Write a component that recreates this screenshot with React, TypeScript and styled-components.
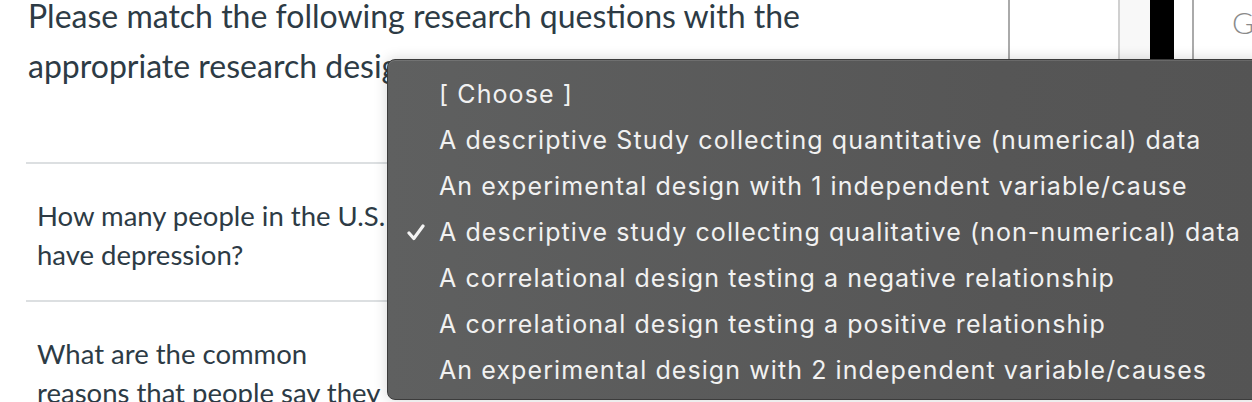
import React from 'react';
import styled, { createGlobalStyle } from 'styled-components';

const GlobalStyle = createGlobalStyle`
  html, body {
    margin: 0;
    padding: 0;
    background: #ffffff;
    overflow: hidden;
  }
  #root {
    width: 1252px;
    height: 402px;
  }
`;

const Page = styled.div`
  position: relative;
  display: flex;
  width: 1252px;
  height: 402px;
  overflow: hidden;
  font-family: Lato, 'Open Sans', sans-serif;
  color: #2d3b45;
`;

const Main = styled.div`
  width: 1008px;
  flex: none;
  padding-left: 26px;
  box-sizing: border-box;
`;

const Heading = styled.h2`
  margin: -9px 0 0 2px;
  font-size: 32px;
  font-weight: 400;
  line-height: 50px;
  height: 171px;
  width: 800px;
`;

const Row = styled.div`
  border-top: 2px solid #dcdfe1;
  padding: 32px 0 26px 11px;
  width: 620px;
`;

const Question = styled.div`
  width: 362px;
  font-size: 27.5px;
  line-height: 39px;
`;

const Columns = styled.div`
  flex: 1;
  display: flex;
  height: 60px;
`;

const Col = styled.div<{ $w: number; $line?: string; $bg?: string }>`
  flex: none;
  width: ${(p) => p.$w}px;
  border-left: ${(p) => (p.$line ? `2px solid ${p.$line}` : 'none')};
  background: ${(p) => p.$bg || 'transparent'};
  box-sizing: border-box;
`;

const Letter = styled.div`
  flex: 1;
  border-left: 2px solid #aaaaaa;
  padding: 4px 0 0 38px;
  font-size: 30px;
  font-weight: 300;
  color: #8a8a8a;
`;

const Menu = styled.ul`
  position: absolute;
  left: 387px;
  top: 59px;
  right: -12px;
  bottom: 2px;
  margin: 0;
  padding: 11px 0 7px 0;
  list-style: none;
  border: 1px solid #3c3c3c;
  border-radius: 8px;
  background: linear-gradient(to right, #5f6060, #565656 70%, #545454);
  box-shadow: 0 0 14px rgba(0, 0, 0, 0.16), inset 0 1px 0 rgba(255, 255, 255, 0.12);
  font-family: Inter, 'Noto Sans', sans-serif;
  color: #f1f1f1;
`;

const Item = styled.li`
  position: relative;
  height: 46px;
  line-height: 46px;
  padding-left: 51px;
  font-size: 25px;
  letter-spacing: 1.08px;
  white-space: nowrap;
`;

const Check = styled.svg`
  position: absolute;
  left: 19px;
  top: 15px;
`;

const options = [
  '[ Choose ]',
  'A descriptive Study collecting quantitative (numerical) data',
  'An experimental design with 1 independent variable/cause',
  'A descriptive study collecting qualitative (non-numerical) data',
  'A correlational design testing a negative relationship',
  'A correlational design testing a positive relationship',
  'An experimental design with 2 independent variable/causes',
];

const selected = 3;

export default function App() {
  return (
    <>
      <GlobalStyle />
      <Page>
        <Main>
          <Heading>
            Please match the following research questions with the appropriate research designs
          </Heading>
          <Row>
            <Question>How many people in the U.S. have depression?</Question>
          </Row>
          <Row>
            <Question>What are the common reasons that people say they feel sad?</Question>
          </Row>
        </Main>
        <Columns>
          <Col $w={110} $line="#aaaaaa" />
          <Col $w={32} $line="#d0d0d0" $bg="#f8f8f8" />
          <Col $w={24} $bg="#000000" />
          <Col $w={18} />
          <Letter>G</Letter>
        </Columns>
        <Menu>
          {options.map((o, i) => (
            <Item key={o}>
              {i === selected && (
                <Check width="18" height="17" viewBox="0 0 18 17">
                  <path
                    d="M2 9 L6.8 14.5 L16 2"
                    fill="none"
                    stroke="#f4f4f4"
                    strokeWidth="3.2"
                    strokeLinecap="round"
                    strokeLinejoin="round"
                  />
                </Check>
              )}
              {o}
            </Item>
          ))}
        </Menu>
      </Page>
    </>
  );
}
